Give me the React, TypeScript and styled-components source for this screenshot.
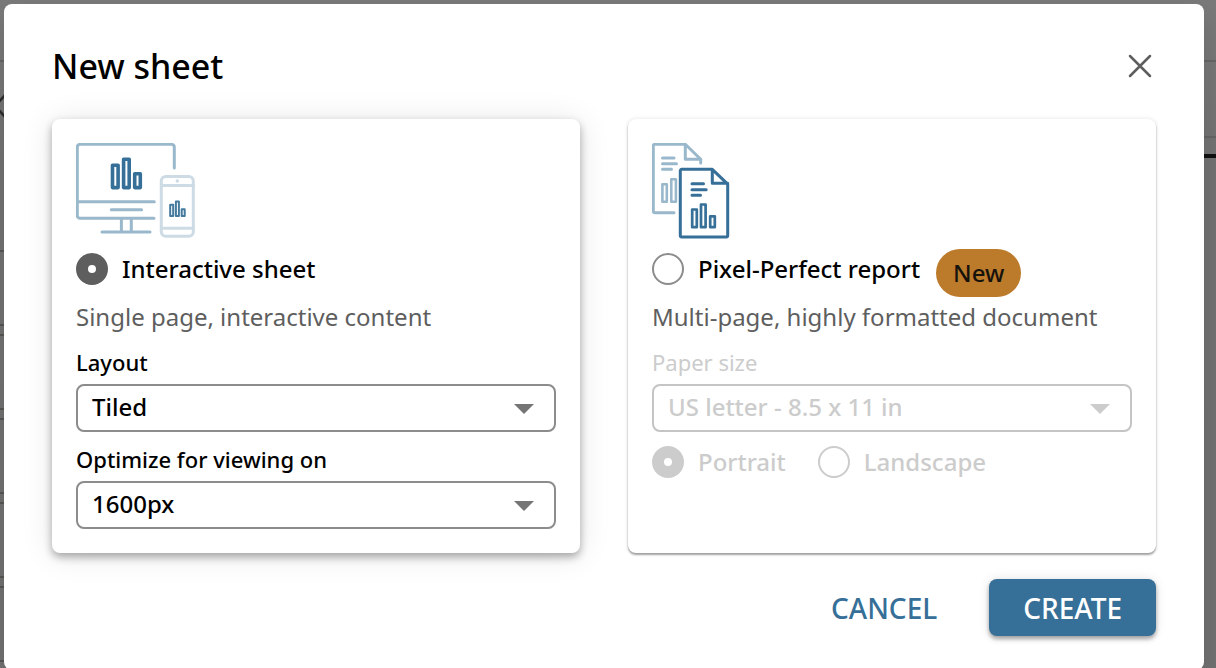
import React, { useState } from "react";
import styled, { createGlobalStyle } from "styled-components";

const GlobalStyle = createGlobalStyle`
  * { box-sizing: border-box; }
  body {
    margin: 0;
    overflow: hidden;
    background: #6d6d6d;
    font-family: "Noto Sans", "Open Sans", sans-serif;
    color: #000;
  }
`;

const Workspace = styled.div`
  display: flex;
  justify-content: space-between;
  min-height: 100vh;
  background: linear-gradient(#7a7a7a, #727272 160px, #717171);
`;

const SidePanel = styled.aside`
  width: 160px;
  height: 100vh;
  overflow: hidden;
`;

const PanelBar = styled.div<{ $height: number; $line?: string; $thick?: number }>`
  height: ${(p) => p.$height}px;
  border-bottom: ${(p) => p.$thick ?? 2}px solid ${(p) => p.$line ?? "#656565"};
`;

const PanelToggle = styled.div`
  height: 188px;
  padding-top: 32px;
`;

const FieldWells = styled.div`
  display: flex;
  flex-direction: column;
  gap: 8px;
`;

const FieldWell = styled.div`
  flex: none;
  height: 76px;
  border: solid #575551;
  border-width: 2px 0;
`;

const Overlay = styled.div`
  position: absolute;
  inset: 0;
  padding: 4px 12px 0 4px;
`;

const Dialog = styled.section`
  padding: 40px 48px 34px;
  border-radius: 8px;
  background: #fff;
  box-shadow: 0 12px 30px rgba(0, 0, 0, 0.12);
`;

const DialogHeader = styled.header`
  display: flex;
  align-items: center;
  justify-content: space-between;
  height: 44px;
  margin-bottom: 31px;
`;

const Title = styled.h1`
  margin: 0;
  font-size: 34px;
  line-height: 44px;
  font-weight: 500;
`;

const CloseButton = styled.button`
  display: flex;
  align-items: center;
  justify-content: center;
  width: 32px;
  height: 32px;
  padding: 0;
  border: 0;
  background: none;
`;

const Cards = styled.div`
  display: grid;
  grid-template-columns: 1fr 1fr;
  gap: 48px;
`;

const Card = styled.article<{ $raised?: boolean }>`
  padding: 24px;
  border-radius: 8px;
  background: #fff;
  box-shadow: ${(p) =>
    p.$raised
      ? "0 4px 8px rgba(0, 0, 0, 0.32), 0 2px 32px rgba(0, 0, 0, 0.1)"
      : "0 2px 2px rgba(0, 0, 0, 0.34), 0 0 4px rgba(0, 0, 0, 0.12)"};
`;

const Picture = styled.svg`
  display: block;
  height: 96px;
  fill: none;
  stroke-linecap: round;
  stroke-linejoin: round;
`;

const ChoiceRow = styled.div`
  display: flex;
  align-items: center;
  gap: 16px;
  height: 60px;
`;

const Choice = styled.label<{ $muted?: boolean }>`
  display: flex;
  align-items: center;
  gap: 14px;
  font-size: 24px;
  line-height: 32px;
  font-weight: 500;
  color: ${(p) => (p.$muted ? "#ccc" : "#000")};
`;

const Radio = styled.input.attrs({ type: "radio" })`
  appearance: none;
  width: 32px;
  height: 32px;
  margin: 0;
  border: 2px solid #8c8c8c;
  border-radius: 50%;
  background: #fff;
  &:checked {
    border: 12px solid #5e5e5e;
  }
  &:disabled {
    border-color: #ccc;
  }
`;

const Badge = styled.span`
  margin-top: 8px;
  padding: 0 17px;
  border-radius: 24px;
  background: #bc7a2b;
  color: #16120c;
  font-size: 24px;
  line-height: 48px;
  font-weight: 500;
`;

const Description = styled.p`
  margin: 0 0 12px;
  color: #5e5e5e;
  font-size: 24px;
  line-height: 36px;
  font-weight: 400;
`;

const Field = styled.div`
  display: flex;
  flex-direction: column;
  margin-bottom: 12px;
  &:last-child {
    margin-bottom: 0;
  }
`;

const FieldLabel = styled.label<{ $muted?: boolean }>`
  padding-bottom: 7px;
  font-size: 22px;
  line-height: 30px;
  font-weight: ${(p) => (p.$muted ? 400 : 500)};
  color: ${(p) => (p.$muted ? "#ccc" : "#000")};
`;

const SelectBox = styled.div`
  display: grid;
  align-items: center;
  > * {
    grid-area: 1 / 1;
  }
  > svg {
    justify-self: end;
    margin: 2px 22px 0 0;
    pointer-events: none;
  }
`;

const Select = styled.select`
  appearance: none;
  width: 100%;
  height: 48px;
  padding: 0 48px 3px 14px;
  border: 2px solid #8c8c8c;
  border-radius: 8px;
  background: #fff;
  color: #000;
  font: 500 24px "Noto Sans", "Open Sans", sans-serif;
  &:disabled {
    border-color: #c4c4c4;
    color: #ccc;
    opacity: 1;
  }
`;

const Orientation = styled.div`
  display: flex;
  gap: 32px;
  padding-top: 2px;
`;

const Actions = styled.footer`
  display: flex;
  justify-content: flex-end;
  gap: 18px;
  margin-top: 26px;
`;

const Button = styled.button<{ $primary?: boolean }>`
  height: 57px;
  padding: 0 34px;
  border: 0;
  border-radius: 8px;
  background: ${(p) => (p.$primary ? "#366f97" : "none")};
  color: ${(p) => (p.$primary ? "#fff" : "#366f97")};
  box-shadow: ${(p) =>
    p.$primary ? "0 3px 4px rgba(0, 0, 0, 0.34), 0 0 12px rgba(0, 0, 0, 0.1)" : "none"};
  font: 500 28px "Noto Sans", "Open Sans", sans-serif;
`;

function DevicesPicture() {
  return (
    <Picture width="120" height="96" viewBox="0 0 120 96" aria-hidden="true">
      <g stroke="#9ab8cc" strokeWidth="3">
        <path d="M98.3 25V4a2.7 2.7 0 0 0-2.7-2.7H4A2.7 2.7 0 0 0 1.3 4v68.6a2.7 2.7 0 0 0 2.7 2.7h74" />
        <path d="M1.300 58.700h77M35.300 66.700h30.300M26 89h48" />
        <path d="M45.400 76v12M55.300 76v12" strokeLinecap="butt" />
      </g>
      <g stroke="#366f97" strokeWidth="3.600">
        <path d="M36.500 22.200h5.600v22.400h-5.600zM47.600 16.200h5.600v28.400h-5.600zM58.700 30.800h5.600v13.800h-5.600z" />
      </g>
      <g stroke="#cddbe5" strokeWidth="3">
        <rect x="85.300" y="33.500" width="32" height="59.700" rx="4.500" />
        <path d="M85.300 42.500h32M85.300 85.300h32" />
        <circle cx="101.300" cy="38" r="1.700" fill="#cddbe5" stroke="none" />
      </g>
      <path
        d="M94.200 61.800h3v11.200h-3zM99.900 58.500h3v14.500h-3zM105.700 66.200h3v6.800h-3z"
        stroke="#447a9e"
        strokeWidth="2"
      />
    </Picture>
  );
}

function ReportPicture() {
  return (
    <Picture width="80" height="96" viewBox="0 0 80 96" aria-hidden="true">
      <g stroke="#9ab8cc" strokeWidth="3">
        <path d="M22 69.700H2.700a1.400 1.400 0 0 1-1.400-1.400V2.700a1.400 1.400 0 0 1 1.400-1.400h30.600l15.400 15V20M33.300 1.300v15h15.400" />
        <path d="M10.500 15h11.500M10.500 20.700h14M10.500 26.300h9" />
        <path d="M10.400 41.300h4.400v17.400h-4.400zM19.300 36.300h4.600v22.400h-4.600z" strokeWidth="2.600" />
      </g>
      <g stroke="#366f97" strokeWidth="3">
        <path d="M60.300 26.300H29.700a1.400 1.400 0 0 0-1.400 1.400v64.900a1.400 1.400 0 0 0 1.400 1.400h44.600a1.400 1.400 0 0 0 1.400-1.400V41.200zM60.300 26.300v14h15.400" />
        <path d="M40 40.700h11.500M40 46.700h14.200M40 52.300h8.500" />
        <path d="M40.200 66.500h4.600v17.700h-4.600zM49 61.500h4.600v22.700h-4.600zM58.200 73.300h4.600v10.900h-4.600z" strokeWidth="2.700" />
      </g>
    </Picture>
  );
}

function Arrow({ color }: { color: string }) {
  return (
    <svg width="20" height="10" viewBox="0 0 20 10" aria-hidden="true">
      <path d="M0 0h20L10 10z" fill={color} />
    </svg>
  );
}

export default function App() {
  const [kind, setKind] = useState("interactive");
  return (
    <>
      <GlobalStyle />
      <Workspace aria-hidden="true">
        <SidePanel>
          <PanelBar $height={62} />
          <PanelToggle>
            <svg width="12" height="24" viewBox="0 0 12 24" fill="none" stroke="#2c2c2a" strokeWidth="2.500">
              <path d="M7 -1-5 12 7 25" />
            </svg>
          </PanelToggle>
          <FieldWells>
            <FieldWell />
            <FieldWell />
            <FieldWell />
            <FieldWell />
            <FieldWell />
          </FieldWells>
        </SidePanel>
        <SidePanel>
          <PanelBar $height={62} />
          <PanelBar $height={76} />
          <PanelBar $height={20} $line="#101010" $thick={4} />
        </SidePanel>
      </Workspace>
      <Overlay>
        <Dialog role="dialog" aria-modal="true" aria-labelledby="dialog-title">
          <DialogHeader>
            <Title id="dialog-title">New sheet</Title>
            <CloseButton aria-label="Close">
              <svg width="24" height="24" viewBox="0 0 24 24" stroke="#5e5e5e" strokeWidth="2.500" strokeLinecap="round">
                <path d="M2 2l20 20M22 2L2 22" />
              </svg>
            </CloseButton>
          </DialogHeader>
          <Cards>
            <Card $raised>
              <DevicesPicture />
              <ChoiceRow>
                <Choice>
                  <Radio name="kind" checked={kind === "interactive"} onChange={() => setKind("interactive")} />
                  Interactive sheet
                </Choice>
              </ChoiceRow>
              <Description>Single page, interactive content</Description>
              <Field>
                <FieldLabel htmlFor="layout">Layout</FieldLabel>
                <SelectBox>
                  <Select id="layout">
                    <option>Tiled</option>
                  </Select>
                  <Arrow color="#757575" />
                </SelectBox>
              </Field>
              <Field>
                <FieldLabel htmlFor="optimize">Optimize for viewing on</FieldLabel>
                <SelectBox>
                  <Select id="optimize">
                    <option>1600px</option>
                  </Select>
                  <Arrow color="#757575" />
                </SelectBox>
              </Field>
            </Card>
            <Card>
              <ReportPicture />
              <ChoiceRow>
                <Choice>
                  <Radio name="kind" checked={kind === "report"} onChange={() => setKind("report")} />
                  Pixel-Perfect report
                </Choice>
                <Badge>New</Badge>
              </ChoiceRow>
              <Description>Multi-page, highly formatted document</Description>
              <Field>
                <FieldLabel htmlFor="paper" $muted>Paper size</FieldLabel>
                <SelectBox>
                  <Select id="paper" disabled>
                    <option>US letter - 8.5 x 11 in</option>
                  </Select>
                  <Arrow color="#ccc" />
                </SelectBox>
              </Field>
              <Orientation>
                <Choice $muted>
                  <Radio name="orientation" defaultChecked disabled />
                  Portrait
                </Choice>
                <Choice $muted>
                  <Radio name="orientation" disabled />
                  Landscape
                </Choice>
              </Orientation>
            </Card>
          </Cards>
          <Actions>
            <Button>CANCEL</Button>
            <Button $primary>CREATE</Button>
          </Actions>
        </Dialog>
      </Overlay>
    </>
  );
}
